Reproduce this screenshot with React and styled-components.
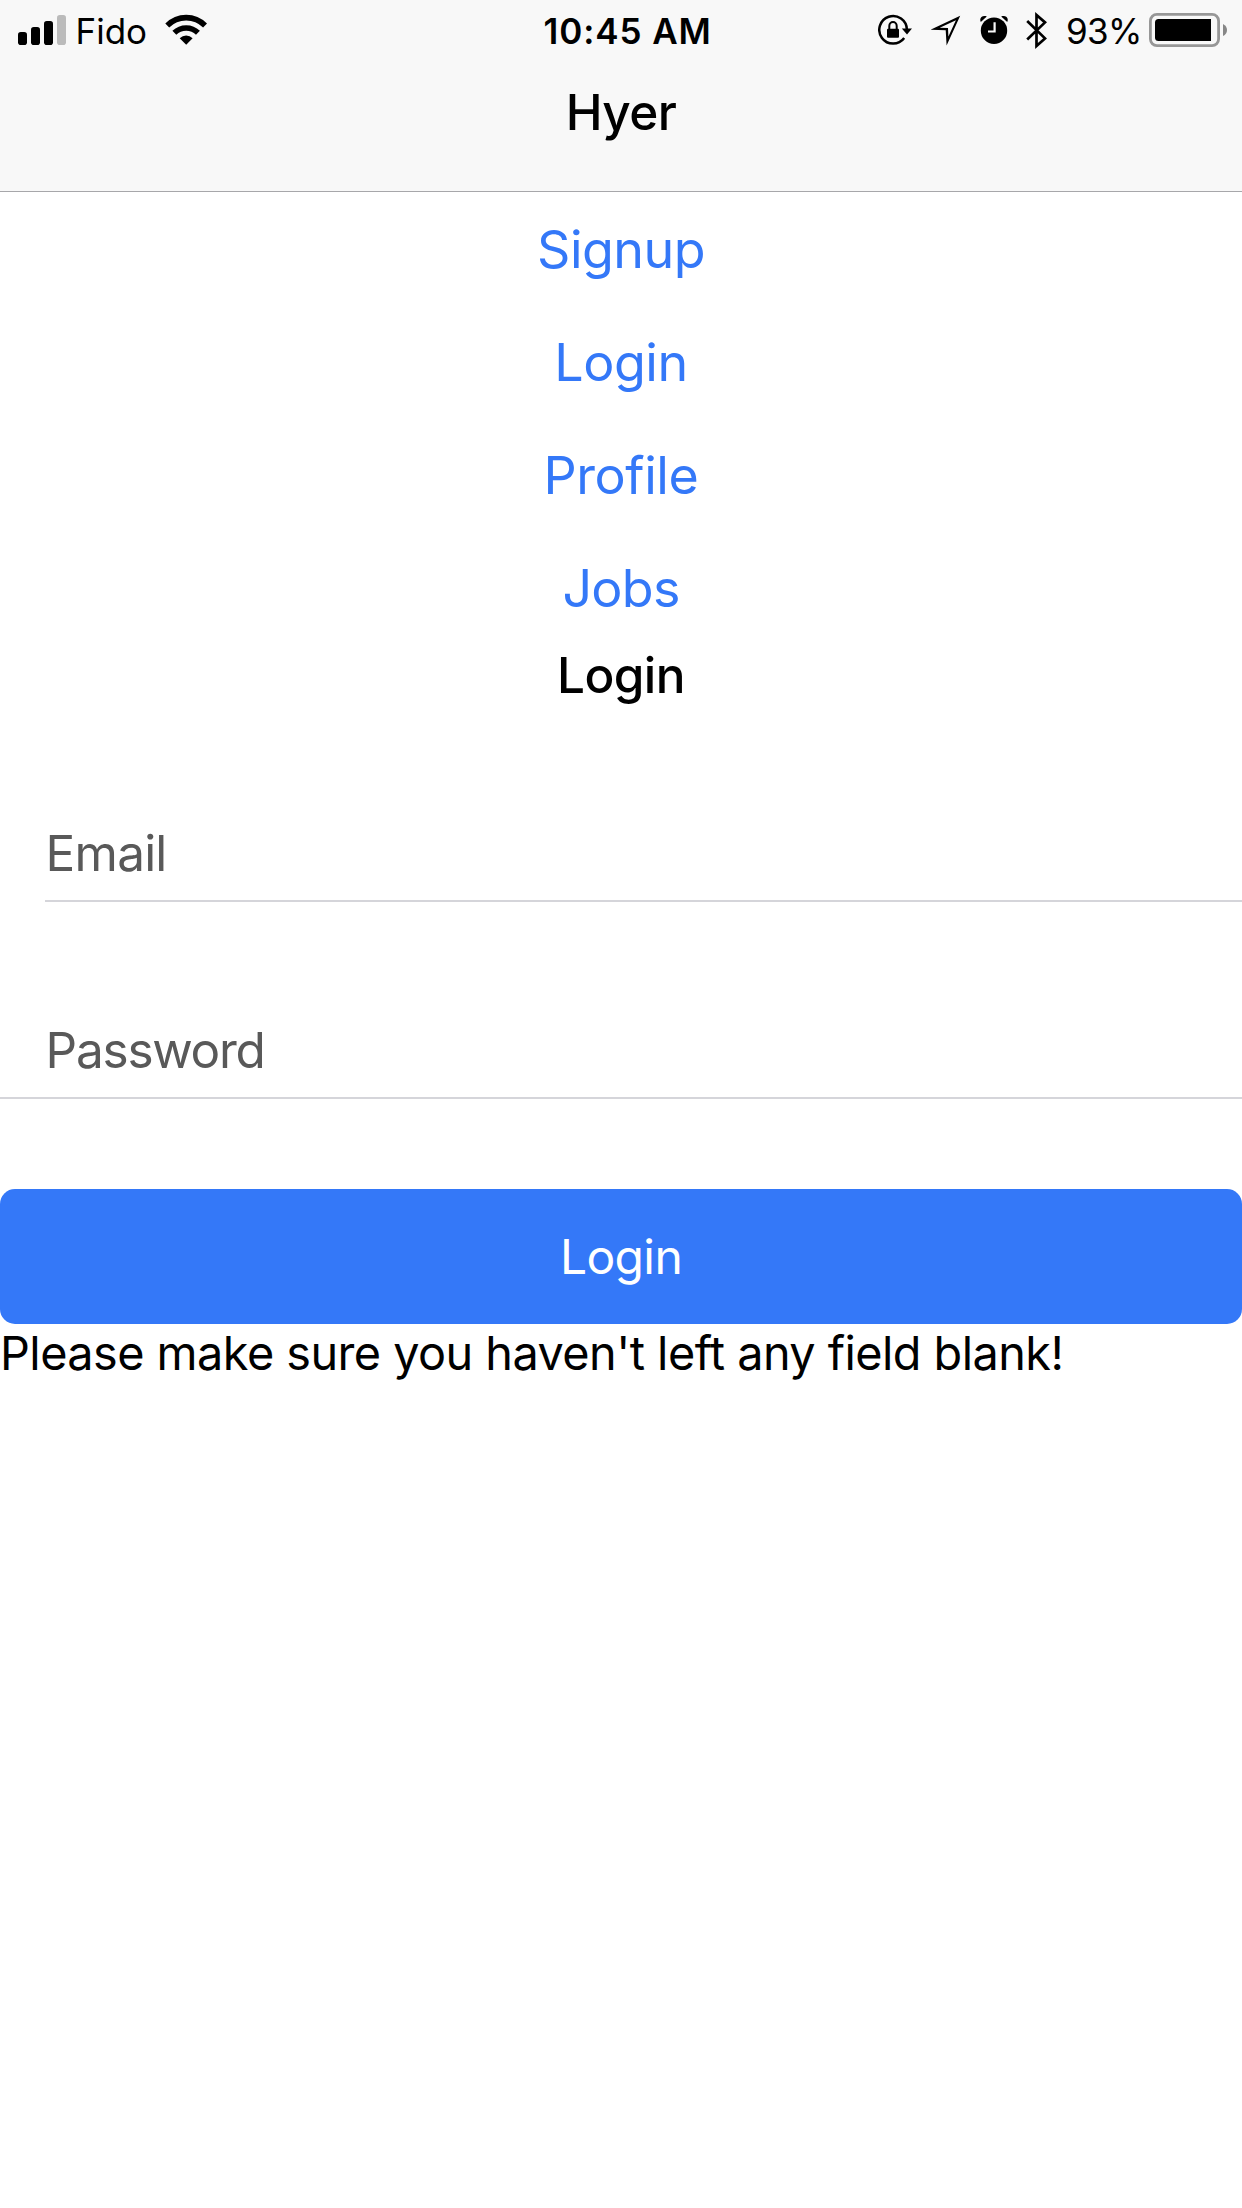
import React from 'react';
import styled, { createGlobalStyle } from 'styled-components';

const GlobalStyle = createGlobalStyle`
  * { box-sizing: border-box; }
  body {
    margin: 0;
    background: #fff;
    color: #000;
    font-family: "Inter", "Liberation Sans", sans-serif;
  }
`;

const Screen = styled.div`
  display: flex;
  flex-direction: column;
  width: 1242px;
  min-height: 2208px;
  background: #fff;
`;

const Header = styled.header`
  display: flex;
  flex-direction: column;
  height: 192px;
  background: #f8f8f8;
  border-bottom: 1px solid #a7a7aa;
`;

const StatusBar = styled.div`
  display: grid;
  grid-template-columns: 543.5px auto 1fr;
  height: 62px;
  font-size: 35px;
  line-height: 62px;
  white-space: nowrap;
`;

const StatusGroup = styled.div`
  display: flex;
  padding-left: ${(p) => p.$start || 0}px;
  padding-right: ${(p) => p.$end || 0}px;
  justify-content: ${(p) => (p.$end ? 'flex-end' : 'flex-start')};
`;

const Carrier = styled.span`
  width: 99px;
  padding-left: 9.5px;
`;

const Clock = styled.span`
  font-weight: 600;
  letter-spacing: 0.91px;
`;

const Percent = styled.span`
  width: 83px;
  letter-spacing: -0.66px;
`;

const Glyph = styled.svg`
  display: block;
  flex: none;
  width: ${(p) => p.$w}px;
  height: 62px;
  margin-right: ${(p) => p.$gap || 0}px;
`;

const Title = styled.h1`
  margin: 0;
  font-size: 49.5px;
  font-weight: 500;
  line-height: ${(p) => p.$line}px;
  letter-spacing: ${(p) => p.$track}px;
  text-align: center;
`;

const Nav = styled.nav`
  display: flex;
  flex-direction: column;
  height: 452px;
  padding-top: 1px;
`;

const NavLink = styled.a`
  flex: none;
  color: #3478f8;
  font-size: 52px;
  line-height: 113px;
  letter-spacing: ${(p) => p.$track}px;
  text-align: center;
`;

const Form = styled.form`
  display: flex;
  flex-direction: column;
`;

const Field = styled.label`
  margin-top: ${(p) => p.$top}px;
  margin-left: ${(p) => p.$inset}px;
  padding-left: ${(p) => 45.6 - p.$inset}px;
  border-bottom: 2px solid #d5d5da;
  color: #595959;
  font-size: 49.5px;
  line-height: 94px;
  letter-spacing: ${(p) => p.$track}px;
`;

const SubmitButton = styled.button`
  height: 135px;
  margin: 90px 0 0;
  padding: 0;
  border: 0;
  border-radius: 15px;
  background: #3478f8;
  color: #fff;
  font-family: inherit;
  font-size: 48px;
  line-height: 135px;
  letter-spacing: -0.62px;
`;

const Message = styled.p`
  margin: 0;
  font-size: 46.8px;
  line-height: 58px;
  letter-spacing: -0.54px;
  white-space: nowrap;
`;

const Signal = () => (
  <Glyph $w={48} viewBox="18 0 48 62">
    <rect x="18" y="32" width="9" height="13" rx="2.8" />
    <rect x="31" y="27" width="9" height="18" rx="2.8" />
    <rect x="44" y="21" width="9" height="24" rx="2.8" />
    <rect x="57" y="15" width="9" height="30" rx="2.8" fill="#bbb" />
  </Glyph>
);

const Wifi = () => (
  <Glyph $w={42} viewBox="165 0 42 62">
    <path d="M165.3 23.6Q174 14.8 186.2 14.8Q198.3 14.8 207 23.6L203.1 27.5Q196 20.5 186.2 20.5Q176.3 20.5 169.2 27.5Z" />
    <path d="M172.4 30.8Q178.2 25.2 186.2 25.2Q194.2 25.2 199.9 30.8L196 34.7Q191.9 30.7 186.2 30.7Q180.4 30.7 176.3 34.7Z" />
    <path d="M179.7 38.2Q182.5 35.6 186.2 35.6Q189.9 35.6 192.6 38.2L186.2 44.8Z" />
  </Glyph>
);

const RotationLock = () => (
  <Glyph $w={34} $gap={18.5} viewBox="878 0 34 62">
    <path d="M904.2 38A13.8 13.8 0 1 1 906.9 29.5" fill="none" stroke="#000" strokeWidth="2.5" />
    <path d="M901.8 28.5H912L907 34.5Z" />
    <rect x="887" y="28.7" width="12" height="9" rx="1" />
    <path d="M889.3 30V26A3.7 3.9 0 0 1 896.7 26V30" fill="none" stroke="#000" strokeWidth="2" />
  </Glyph>
);

const Location = () => (
  <Glyph $w={30} $gap={19.5} viewBox="931 0 30 62">
    <path fillRule="evenodd" d="M960.2 15.7L930.6 29.8L945.7 30.2L946.6 45.5ZM955.9 20.2L948.4 36.5L948 27.9L939.8 27.7Z" />
  </Glyph>
);

const Alarm = () => (
  <Glyph $w={28} $gap={18} viewBox="980 0 28 62">
    <circle cx="994" cy="30.7" r="13.2" />
    <path d="M980.8 22C978.8 18 982.5 14.8 986.8 16.5Z" />
    <path d="M1007.2 22C1009.2 18 1005.5 14.8 1001.2 16.5Z" />
    <path d="M988 31.5H994.6V22.3" fill="none" stroke="#f8f8f8" strokeWidth="2.2" />
  </Glyph>
);

const Bluetooth = () => (
  <Glyph $w={21} $gap={19} viewBox="1026 0 21 62">
    <path
      d="M1027.2 21L1045 38.4L1036.5 46V15L1045 22.4L1027.2 39.5"
      fill="none"
      stroke="#000"
      strokeWidth="2.7"
    />
  </Glyph>
);

const Battery = () => (
  <Glyph $w={78} viewBox="1149 0 78 62">
    <rect x="1150.4" y="14.4" width="68.2" height="31.2" rx="6.5" fill="none" stroke="#979797" strokeWidth="2.8" />
    <path d="M1158.5 19H1211V41H1158.5Q1155 41 1155 37.5V22.5Q1155 19 1158.5 19Z" />
    <path d="M1223 24Q1227 26 1227 30Q1227 34 1223 36Z" fill="#878787" />
  </Glyph>
);

const links = [
  { label: 'Signup', track: -0.55 },
  { label: 'Login', track: -0.44 },
  { label: 'Profile', track: -0.42 },
  { label: 'Jobs', track: -0.73 },
];

export default function App() {
  return (
    <>
      <GlobalStyle />
      <Screen>
        <Header>
          <StatusBar>
            <StatusGroup $start={18}>
              <Signal />
              <Carrier>Fido</Carrier>
              <Wifi />
            </StatusGroup>
            <Clock>10:45 AM</Clock>
            <StatusGroup $end={15}>
              <RotationLock />
              <Location />
              <Alarm />
              <Bluetooth />
              <Percent>93%</Percent>
              <Battery />
            </StatusGroup>
          </StatusBar>
          <Title $line={100} $track={-0.65}>Hyer</Title>
        </Header>
        <Nav>
          {links.map(({ label, track }) => (
            <NavLink key={label} $track={track}>{label}</NavLink>
          ))}
        </Nav>
        <Form>
          <Title as="h2" $line={62} $track={-0.6}>Login</Title>
          <Field $top={100} $inset={45} $track={-0.78}>Email</Field>
          <Field $top={101} $inset={0} $track={-1.25}>Password</Field>
          <SubmitButton type="button">Login</SubmitButton>
          <Message>Please make sure you haven't left any field blank!</Message>
        </Form>
      </Screen>
    </>
  );
}
